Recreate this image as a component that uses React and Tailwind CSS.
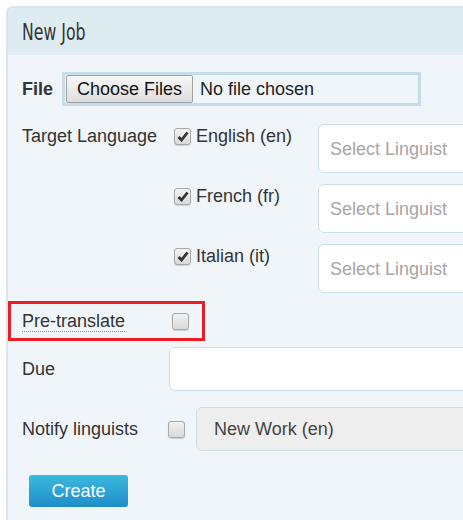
import React from "react";

function Check({ checked }) {
  return (
    <span className="flex h-[17px] w-[17px] shrink-0 items-center justify-center rounded-[3px] border border-[#a9a9a9] bg-gradient-to-b from-[#f2f2f2] to-[#d9d9d9] shadow-[0_1px_1px_rgba(0,0,0,0.15)]">
      {checked && (
        <svg width="12" height="11" viewBox="0 0 12 11">
          <path d="M1.5 6 L4.5 9 L10.5 1.5" fill="none" stroke="#333" strokeWidth="2.8" strokeLinejoin="miter" />
        </svg>
      )}
    </span>
  );
}

const langs = ["English (en)", "French (fr)", "Italian (it)"];

export default function App() {
  return (
    <div
      className="h-[520px] w-[463px] overflow-hidden bg-white pl-[6px] pt-[6px] text-[18px] leading-[22px] text-[#333]"
      style={{ fontFamily: '"Liberation Sans", Arial, sans-serif' }}
    >
      <div className="h-[600px] w-[520px] rounded-tl-[7px] border-l-2 border-t-2 border-[#d4e6ee] bg-[#f0f5fa]">
        {/* Header */}
        <div className="flex h-[47px] items-center rounded-tl-[5px] bg-[#deebf1] pl-[14px]">
          <span
            className="origin-left scale-x-[0.76] text-[23px] text-[#333]"
            style={{ fontFamily: '"DejaVu Sans Condensed", "Liberation Sans Narrow", sans-serif', fontStretch: "condensed" }}
          >
            New Job
          </span>
        </div>

        {/* File */}
        <div className="mt-[17px] flex items-center pl-[14px]">
          <span className="w-[40px] font-bold">File</span>
          <div className="flex h-[34px] w-[359px] items-center border-[3px] border-[#c6dde7] pl-px">
            <span className="flex h-[28px] w-[127px] items-center justify-center rounded-[2px] border border-[#a0a0a0] bg-gradient-to-b from-[#f7f7f7] to-[#dedede] text-[#111]">
              Choose Files
            </span>
            <span className="ml-[7px] text-[#222]">No file chosen</span>
          </div>
        </div>

        {/* Target languages */}
        <div className="mt-[18px] flex flex-col gap-[11px]">
          {langs.map((l, i) => (
            <div key={l} className="flex items-start pl-[14px]">
              <span className="mt-px w-[152px]">{i === 0 ? "Target Language" : ""}</span>
              <div className="mt-px flex w-[144px] items-center gap-[5px]">
                <Check checked />
                <span>{l}</span>
              </div>
              <div className="flex h-[49px] w-[200px] items-center rounded-[6px] border border-[#c9e0ea] bg-white pl-[11px] text-[#a6a6a6]">
                Select Linguist
              </div>
            </div>
          ))}
        </div>

        {/* Pre-translate */}
        <div className="mt-[8px] flex h-[40px] w-[197px] items-center border-[3px] border-[#ed1c24] pl-[11px]">
          <span className="w-[150px]">
            <span className="border-b border-dotted border-[#888]">Pre-translate</span>
          </span>
          <Check />
        </div>

        {/* Due */}
        <div className="mt-[6px] flex items-center pl-[14px]">
          <span className="w-[147px]">Due</span>
          <div className="h-[44px] w-[320px] rounded-[6px] border border-[#c9e0ea] bg-white" />
        </div>

        {/* Notify */}
        <div className="mt-[16px] flex items-center pl-[14px]">
          <span className="w-[146px]">Notify linguists</span>
          <Check />
          <div className="ml-[11px] flex h-[44px] w-[300px] items-center rounded-[6px] border border-[#c9e0ea] bg-[#eeeeee] pl-[17px] text-[#444]">
            New Work (en)
          </div>
        </div>

        {/* Create */}
        <div className="mt-[24px] pl-[21px]">
          <button className="h-[32px] w-[99px] rounded-[3px] bg-gradient-to-b from-[#3cbade] to-[#1f8dca] text-[18px] text-white">
            Create
          </button>
        </div>
      </div>
    </div>
  );
}
